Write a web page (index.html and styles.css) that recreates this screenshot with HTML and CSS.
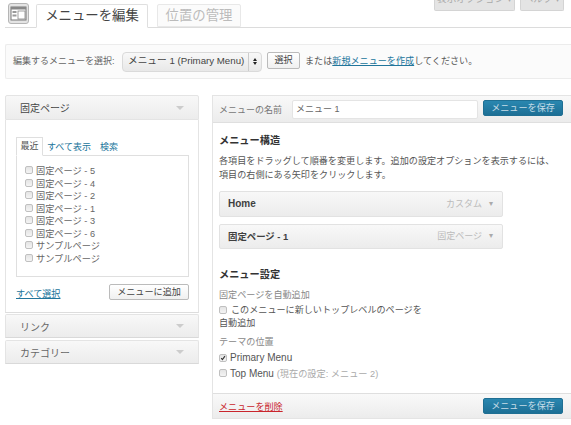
FILE: index.html
```html
<!DOCTYPE html>
<html lang="ja">
<head>
<meta charset="utf-8">
<title>メニューを編集</title>
<link rel="stylesheet" href="styles.css">
</head>
<body>
<div class="meta">
  <div class="meta-btn meta-wide">表示オプション ▾</div>
  <div class="meta-btn meta-narrow">ヘルプ ▾</div>
</div>
<header class="head">
  <svg class="logo" width="21" height="21" viewBox="0 0 21 21">
    <rect x="0.5" y="0.5" width="20" height="20" rx="2.5" fill="#e4e4e4" stroke="#b5b5b5"/>
    <rect x="3" y="4" width="15" height="13" fill="#fff" stroke="#777"/>
    <rect x="3" y="4" width="15" height="2.5" fill="#888"/>
    <rect x="4.5" y="8" width="4" height="2" fill="#999"/>
    <rect x="4.5" y="11.5" width="4" height="2" fill="#999"/>
    <rect x="10" y="8" width="7" height="8" fill="#fff" stroke="#888" stroke-width="0.8"/>
  </svg>
  <nav class="tabs">
    <span class="tab tab-on">メニューを編集</span>
    <span class="tab tab-off">位置の管理</span>
  </nav>
</header>
<section class="select-bar">
  <span class="select-label">編集するメニューを選択:</span>
  <div class="select-box"><span class="select-value">メニュー 1 (Primary Menu)</span><span class="select-arrows"><i class="up"></i><i class="down"></i></span></div>
  <span class="btn btn-pick">選択</span>
  <span class="select-tail">または<a href="#">新規メニューを作成</a>してください。</span>
</section>
<main class="cols">
  <aside class="side">
    <div class="acc-head acc-open"><span>固定ページ</span><i class="tri"></i></div>
    <div class="acc-body">
      <div class="sub-tabs">
        <span class="sub-tab sub-on">最近</span>
        <span class="sub-tab sub-all">すべて表示</span>
        <span class="sub-tab">検索</span>
      </div>
      <ul class="pages">
        <li><i class="cb"></i>固定ページ - 5</li>
        <li><i class="cb"></i>固定ページ - 4</li>
        <li><i class="cb"></i>固定ページ - 2</li>
        <li><i class="cb"></i>固定ページ - 1</li>
        <li><i class="cb"></i>固定ページ - 3</li>
        <li><i class="cb"></i>固定ページ - 6</li>
        <li><i class="cb"></i>サンプルページ</li>
        <li><i class="cb"></i>サンプルページ</li>
      </ul>
      <div class="add-row">
        <a href="#">すべて選択</a>
        <span class="btn btn-add">メニューに追加</span>
      </div>
    </div>
    <div class="acc-head acc-closed"><span>リンク</span><i class="tri"></i></div>
    <div class="acc-head acc-closed"><span>カテゴリー</span><i class="tri"></i></div>
  </aside>
  <section class="editor">
    <div class="ed-head">
      <span class="name-label">メニューの名前</span>
      <div class="name-input">メニュー 1</div>
      <span class="btn-save">メニューを保存</span>
    </div>
    <div class="ed-body">
      <h3 class="h-struct">メニュー構造</h3>
      <p class="desc">各項目をドラッグして順番を変更します。追加の設定オプションを表示するには、<br>項目の右側にある矢印をクリックします。</p>
      <div class="item item-a"><b class="item-home">Home</b><span class="item-type">カスタム</span><i class="item-arrow">▾</i></div>
      <div class="item item-b"><b>固定ページ - 1</b><span class="item-type">固定ページ</span><i class="item-arrow">▾</i></div>
      <h3 class="h-settings">メニュー設定</h3>
      <div class="group-label">固定ページを自動追加</div>
      <div class="wrap-check"><i class="cb"></i>このメニューに新しいトップレベルのページを<br>自動追加</div>
      <div class="group-label group-theme">テーマの位置</div>
      <div class="check-row"><i class="cb cb-on"><svg width="8" height="8" viewBox="0 0 8 8"><path d="M1.6 4.2 3.2 6 6.6 1.6" fill="none" stroke="#333" stroke-width="1.5"/></svg></i>Primary Menu</div>
      <div class="check-row"><i class="cb"></i>Top Menu <span class="muted">(現在の設定: メニュー 2)</span></div>
    </div>
    <div class="ed-foot">
      <a href="#" class="del">メニューを削除</a>
      <span class="btn-save">メニューを保存</span>
    </div>
  </section>
</main>
</body>
</html>
```
FILE: styles.css
```css
* { box-sizing: border-box; }
html, body { margin: 0; padding: 0; height: 425px; overflow: hidden; background: #fff; }
body {
  position: relative;
  font-family: "Liberation Sans", "Noto Sans CJK JP", sans-serif;
  font-size: 9.1px;
  color: #555;
}
a { color: #21759b; }
i { font-style: normal; }

.meta { position: absolute; top: 0; right: 7px; display: flex; gap: 5px; height: 11px; }
.meta-btn {
  height: 11px; display: flex; align-items: flex-end; justify-content: center; overflow: hidden;
  padding-bottom: 5px; font-size: 9.6px; line-height: 12px; color: #aaa; background: #e4e4e4;
  border: 1px solid #d4d4d4; border-top: 0; border-radius: 0 0 2px 2px;
}
.meta-wide { width: 81px; }
.meta-narrow { width: 44px; }

.head { display: flex; align-items: flex-end; height: 28px; margin-left: 5px; padding-left: 3px; border-bottom: 1px solid #dcdcdc; }
.logo { margin-bottom: 3px; margin-right: 7px; }
.tabs { display: flex; gap: 9px; }
.tab { height: 24px; font-size: 13.4px; line-height: 22px; text-align: center; border: 1px solid #dfdfdf; border-radius: 2px 2px 0 0; }
.tab-on { width: 112px; color: #444; background: #fff; border-bottom-color: #fff; margin-bottom: -1px; }
.tab-off { width: 84px; color: #bbb; background: #fbfbfb; border-color: #e8e8e8; height: 23px; }

.select-bar {
  display: flex; align-items: center; height: 35px; margin: 16px 0 0 5px; padding: 0 0 0 7px;
  background: #fbfbfb; border: 1px solid #ececec; border-right: 0; border-radius: 2px 0 0 2px;
}
.select-label { font-size: 9px; width: 109px; color: #666; margin-bottom: 2px; white-space: nowrap; }
.select-box {
  display: flex; width: 140px; height: 20px; align-items: stretch;
  background: linear-gradient(#f8f8f8, #e8e8e8); border: 1px solid #dadada; border-radius: 4px;
}
.select-value { flex: 1; padding-left: 5px; line-height: 16px; color: #444; font-size: 9.7px; white-space: nowrap; }
.select-arrows { width: 13px; border-left: 1px solid #ccc; display: flex; flex-direction: column; align-items: center; justify-content: center; gap: 1px; }
.select-arrows .up { border: 2px solid transparent; border-top: 0; border-bottom: 3px solid #222; }
.select-arrows .down { border: 2px solid transparent; border-bottom: 0; border-top: 3px solid #222; }
.btn {
  display: inline-block; font-size: 9.1px; color: #444; text-align: center;
  background: linear-gradient(#fff, #f0f0f0); border: 1px solid #bbb; border-radius: 2px;
}
.btn-pick { width: 33px; height: 17px; line-height: 15px; margin-left: 5px; margin-bottom: 3px; }
.select-tail { margin-left: 5px; color: #555; margin-bottom: 3px; }

.cols { display: flex; align-items: flex-start; gap: 13px; margin: 16px 0 0 5px; }
.side { width: 194px; }
.acc-head {
  display: flex; justify-content: space-between; align-items: center; padding: 0 15px 0 14px;
  border: 1px solid #e4e4e4; border-radius: 2px 2px 0 0;
  background: linear-gradient(#f8f8f8, #ececec); color: #444; font-size: 10px;
}
.acc-open { height: 25px; }
.acc-closed { height: 24px; color: #666; margin-bottom: 2px; border-bottom-color: #d9d9d9; }
.tri { width: 0; height: 0; border: 4px solid transparent; border-bottom: 0; border-top: 4px solid #ccc; margin-right: -1px; }
.acc-body { height: 193px; padding: 17px 9px 0 10px; border: 1px solid #e4e4e4; border-top: 0; border-bottom-color: #ddd; margin-bottom: 1px; background: #fff; }
.sub-tabs { display: flex; align-items: flex-end; height: 18px; font-size: 9px; color: #21759b; }
.sub-tab { line-height: 15px; }
.sub-on { width: 27px; height: 19px; margin-bottom: -1px; line-height: 16px; text-align: center; color: #555; border: 1px solid #dfdfdf; border-bottom: 1px solid #fff; background: #fff; position: relative; z-index: 1; }
.sub-all { margin: 0 9px 0 4px; }
.pages { list-style: none; margin: 0; padding: 8px 0 0 8px; height: 122px; border: 1px solid #dfdfdf; font-size: 9.2px; color: #666; }
.pages li { display: flex; align-items: center; height: 12.5px; white-space: nowrap; }
.cb {
  display: inline-flex; flex: none; width: 8px; height: 8px; margin-right: 3px;
  background: linear-gradient(#e4e4e4, #f4f4f4); border: 1px solid #c0c0c0; border-radius: 2px;
  align-items: center; justify-content: center;
}
.add-row { display: flex; justify-content: space-between; align-items: center; margin-top: 7px; }
.add-row a { font-size: 9.1px; margin-top: 2px; }
.btn-add { width: 80px; height: 16px; line-height: 14px; }

.editor { width: 359px; height: 324px; display: flex; flex-direction: column; border: 1px solid #e4e4e4; border-right: 0; background: #fff; }
.ed-head {
  display: flex; align-items: center; flex: none; height: 27px; padding-left: 6px;
  background: linear-gradient(#f9f9f9, #ececec); border-bottom: 1px solid #dfdfdf;
}
.name-label { width: 73px; font-size: 9px; color: #777; }
.name-input { width: 186px; height: 19px; line-height: 17px; padding-left: 3px; font-size: 9px; color: #666; background: #fff; border: 1px solid #e4e4e4; border-radius: 2px; }
.btn-save {
  display: inline-block; width: 80px; height: 16px; line-height: 15px; margin-left: 5px; text-align: center;
  font-size: 9.1px; color: #c6dde8; background: linear-gradient(#2a87b0, #1d6f95);
  border: 1px solid #1f6f93; border-radius: 2px;
}
.ed-head .btn-save { margin-top: -3px; }
.ed-body { flex: 1; padding: 0 6px; }
h3 { margin: 0; font-size: 10.2px; font-weight: bold; color: #333; }
.h-struct { margin-top: 11px; line-height: 14px; }
.desc { margin: 6px 0 0; line-height: 14px; color: #555; white-space: nowrap; }
.item {
  display: flex; align-items: center; width: 284px; padding: 0 9px 2px 8px; margin-top: 7px;
  background: linear-gradient(#f8f8f8, #ececec); border: 1px solid #e2e2e2; border-radius: 2px;
  color: #444;
}
.item-a { height: 26px; margin-top: 9px; }
.item-b { height: 25px; }
.item b { font-size: 9.4px; color: #3f3f3f; }
.item .item-home { font-size: 10px; }
.item-type { margin-left: auto; color: #bbb; font-size: 9px; }
.item-arrow { margin-left: 7px; color: #aaa; font-size: 8px; }
.h-settings { margin-top: 19px; line-height: 14px; }
.group-label { margin-top: 7px; line-height: 13px; color: #888; }
.wrap-check { line-height: 13px; margin-top: 2px; color: #555; }
.wrap-check .cb { margin-right: 4px; vertical-align: -1px; }
.group-theme { margin-top: 6px; margin-bottom: 1px; }
.check-row { display: flex; align-items: center; height: 15.5px; white-space: pre; font-size: 10px; color: #555; }
.check-row .cb { margin-right: 3px; }
.muted { color: #aaa; font-size: 9.2px; }
.ed-foot {
  display: flex; justify-content: space-between; align-items: center; flex: none; height: 25px; padding: 0 8px 0 6px;
  background: linear-gradient(#f9f9f9, #ececec); border-top: 1px solid #dfdfdf;
}
.del { color: #c9252c; margin-top: -1px; }
```
